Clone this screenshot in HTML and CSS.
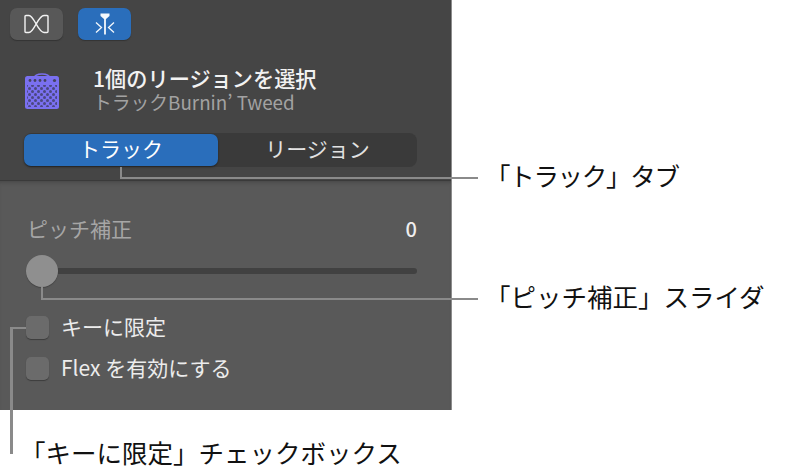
FILE: index.html
```html
<!DOCTYPE html>
<html lang="ja">
<head>
    <meta charset="UTF-8">
    <meta name="viewport" content="width=device-width, initial-scale=1.0">
    <title>トラック設定</title>
    <link rel="stylesheet" href="styles.css">
</head>
<body>
    <div class="figure">
        <div class="panel">
            <div class="panel-top">
                <div class="toolbar">
                    <button class="tool-btn">
                        <svg width="27" height="20" viewBox="0 0 27 20" fill="none" stroke="#f2f2f2" stroke-width="1.4"><path d="M3 1.5H6C11 1.5 15 18.5 21 18.5H24Q25 18.5 25 17.5V2.5Q25 1.5 24 1.5H21C15 1.5 11 18.5 6 18.5H3Q2 18.5 2 17.5V2.5Q2 1.5 3 1.5Z"/></svg>
                    </button>
                    <button class="tool-btn active">
                        <svg width="20" height="22" viewBox="0 0 20 22" fill="none" stroke="#f4f8fc" stroke-width="1.3"><path d="M5.5 0.5H14.5V3L11 6H9L5.5 3Z" fill="#f4f8fc" stroke="none"/><path d="M10 5V21.5" stroke-width="1.8"/><path d="M1 9.5L6.5 14.5L1 19.5"/><path d="M19 9.5L13.5 14.5L19 19.5"/></svg>
                    </button>
                </div>
                <div class="region-info">
                    <svg class="amp" width="34" height="37" viewBox="0 0 34 37">
                        <defs>
                            <pattern id="mesh" width="6" height="6" patternUnits="userSpaceOnUse">
                                <rect width="6" height="6" fill="#7a70f0"/>
                                <circle cx="1.5" cy="1.5" r="1.5" fill="#4b4880"/>
                                <circle cx="4.5" cy="4.5" r="1.5" fill="#4b4880"/>
                            </pattern>
                        </defs>
                        <path d="M9 6C10 0.5 24 0.5 25 6" fill="none" stroke="#7a70f0" stroke-width="1.5"/>
                        <rect y="4" width="34" height="33" rx="2.5" fill="#7a70f0"/>
                        <rect x="2" y="13" width="30" height="22" fill="url(#mesh)"/>
                        <g fill="#45435f"><circle cx="5" cy="8.5" r="1.4"/><circle cx="10" cy="8.5" r="1.4"/><circle cx="15" cy="8.5" r="1.4"/><circle cx="20" cy="8.5" r="1.4"/><circle cx="29.5" cy="8.5" r="1.6"/></g>
                    </svg>
                    <div class="region-text">
                        <div class="region-title">1個のリージョンを選択</div>
                        <div class="region-sub">トラックBurnin’ Tweed</div>
                    </div>
                </div>
                <div class="tabs">
                    <div class="tab selected">トラック</div>
                    <div class="tab">リージョン</div>
                </div>
            </div>
            <div class="panel-bottom">
                <div class="pitch-row">
                    <span class="pitch-label">ピッチ補正</span>
                    <span class="pitch-value">0</span>
                </div>
                <div class="slider"><div class="thumb"></div></div>
                <label class="check-row"><span class="check"></span><span class="check-text">キーに限定</span></label>
                <label class="check-row"><span class="check"></span><span class="check-text">Flex を有効にする</span></label>
            </div>
        </div>

        <div class="line tab-h"></div>
        <div class="line tab-v"></div>
        <div class="line pitch-h"></div>
        <div class="line pitch-v"></div>
        <div class="line key-h"></div>
        <div class="line key-v"></div>

        <div class="callout tab-callout">「トラック」タブ</div>
        <div class="callout pitch-callout">「ピッチ補正」スライダ</div>
        <div class="callout key-callout">「キーに限定」チェックボックス</div>
    </div>
</body>
</html>
```

FILE: styles.css
```css
body {
    margin: 0;
    background: #fff;
    font-family: "Noto Sans CJK JP", "Noto Sans", sans-serif;
}
.figure {
    position: relative;
    width: 787px;
    height: 476px;
    overflow: hidden;
}
.panel {
    width: 451px;
    height: 410px;
    border-right: 1px solid #8c8c8c;
    display: flex;
    flex-direction: column;
}
.panel-top {
    height: 181px;
    box-sizing: border-box;
    padding: 8px 35px 0 10px;
    background: #454545;
    border-bottom: 1px solid #3a3a3a;
}
.panel-bottom {
    flex: 1;
    padding: 0 34px 0 26px;
    background: #595959;
    box-shadow: inset 0 4px 4px -3px #444;
}
.toolbar {
    display: flex;
    gap: 15px;
}
.tool-btn {
    width: 53px;
    height: 32px;
    padding: 0;
    border: none;
    border-radius: 7px;
    background: #585858;
    box-shadow: 0 1px 1px #333;
    display: flex;
    align-items: center;
    justify-content: center;
}
.tool-btn.active {
    background: #2a6ebb;
}
.region-info {
    display: flex;
    align-items: center;
    gap: 34px;
    margin: 26px 0 0 15px;
    height: 45px;
}
.amp {
    flex: none;
    margin-top: 4px;
}
.region-title {
    color: #f2f2f2;
    font-size: 21.2px;
    font-weight: 500;
    line-height: 24px;
    margin-bottom: 2px;
    white-space: nowrap;
}
.region-sub {
    color: #a2a2a2;
    font-size: 18.8px;
    line-height: 20px;
    white-space: nowrap;
}
.tabs {
    display: flex;
    width: 393px;
    height: 34px;
    margin: 22px 0 0 14px;
    background: #3a3a3a;
    border-radius: 8px;
}
.tab {
    flex: 1;
    display: flex;
    align-items: center;
    justify-content: center;
    padding-bottom: 5px;
    box-sizing: border-box;
    color: #e2e2e2;
    font-size: 21px;
}
.tab.selected {
    flex: 0 0 194px;
    height: 32px;
    margin-top: 1px;
    background: #2a6ebb;
    border-radius: 7px;
    color: #fff;
    box-shadow: 0 1px 2px #222;
}
.pitch-row {
    display: flex;
    justify-content: space-between;
    align-items: center;
    height: 26px;
    margin-top: 34px;
    padding-left: 1px;
}
.pitch-label {
    color: #a6a6a6;
    font-size: 21px;
}
.pitch-value {
    color: #eee;
    font-size: 20px;
    font-weight: 500;
}
.slider {
    position: relative;
    height: 6px;
    margin: 27px 0 42px 16px;
    background: #414141;
    border-radius: 3px;
}
.thumb {
    position: absolute;
    left: -16px;
    top: -13px;
    width: 32px;
    height: 32px;
    border-radius: 50%;
    background: #8f8f8f;
    box-shadow: 0 1px 1px #444;
}
.check-row {
    display: flex;
    align-items: center;
    gap: 12px;
    height: 23px;
    margin-bottom: 18px;
    color: #ececec;
    font-size: 21px;
}
.check-text {
    margin-bottom: 4px;
}
.check {
    width: 23px;
    height: 23px;
    border-radius: 5px;
    background: #6b6b6b;
    box-shadow: 0 1px 1px #3c3c3c;
}
.line {
    position: absolute;
    background: #8a8a8a;
}
.tab-h { left: 120px; top: 177px; width: 358px; height: 2px; }
.tab-v { left: 120px; top: 167px; width: 2px; height: 11px; }
.pitch-h { left: 41px; top: 298px; width: 437px; height: 2px; }
.pitch-v { left: 41px; top: 287px; width: 2px; height: 12px; }
.key-h { left: 11px; top: 327px; width: 15px; height: 2px; }
.key-v { left: 10px; top: 327px; width: 3px; height: 127px; }
.callout {
    position: absolute;
    color: #111;
    font-size: 25.5px;
    line-height: 32px;
    white-space: nowrap;
}
.tab-callout { left: 485px; top: 159px; letter-spacing: -1.3px; }
.pitch-callout { left: 485px; top: 280px; }
.key-callout { left: 20px; top: 436px; }
```
